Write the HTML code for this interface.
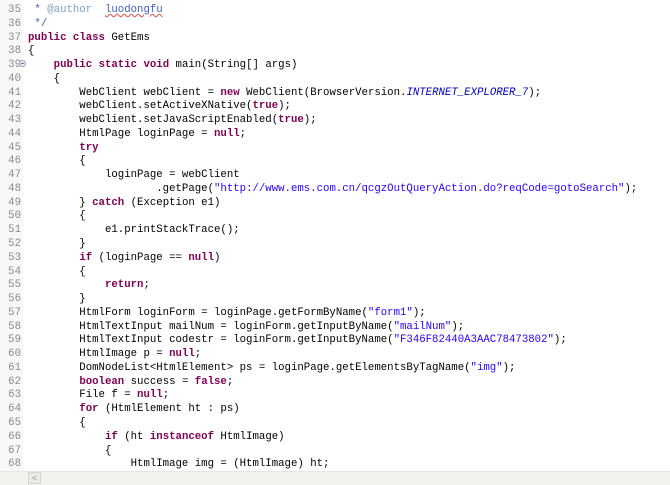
<!DOCTYPE html>
<html><head><meta charset="utf-8">
<style>
html,body{margin:0;padding:0;width:670px;height:484px;overflow:hidden;background:#fff;}
#g{position:absolute;left:0;top:0;width:23px;height:471px;background:#f8f8f6;}
#ln{position:absolute;left:0;top:4px;width:21px;text-align:right;font:10.7px/13.76px "Liberation Mono",monospace;color:#8a8a8a;white-space:pre;}
#code{position:absolute;left:28px;top:4px;font:10.7px/13.76px "Liberation Mono",monospace;color:#000;white-space:pre;}
.k{color:#7f0055;font-weight:bold}
.s{color:#2a00ff}
.c{color:#3f5fbf}
.t{color:#7f9fbf}
.f{color:#0000c0;font-style:italic}
.u{text-decoration:underline wavy #e06060;}
#sb{position:absolute;left:0;top:471px;width:670px;height:13px;background:#f3f2ee;border-top:1px solid #e6e5e0;}
#arr{position:absolute;left:28px;top:472px;width:13px;height:12px;background:#eceae4;border:1px solid #d8d6d0;box-sizing:border-box;font:9px/10px "Liberation Sans",sans-serif;color:#999;text-align:center;}
#fold{position:absolute;left:19px;top:60px;width:7px;height:7px;border:1px solid #9aa8c0;border-radius:50%;box-sizing:border-box;background:#e8eef8;}
#fold:after{content:"";position:absolute;left:1px;top:2px;width:3px;height:1px;background:#6a7a9a;}
</style></head><body>
<div id="g"></div>
<div id="ln">35
36
37
38
39
40
41
42
43
44
45
46
47
48
49
50
51
52
53
54
55
56
57
58
59
60
61
62
63
64
65
66
67
68</div>
<div id="fold"></div>
<div id="code"><span class="c"> * <span class="t">@author</span>  <span class="u">luodongfu</span></span>
<span class="c"> */</span>
<span class="k">public</span> <span class="k">class</span> GetEms
{
    <span class="k">public</span> <span class="k">static</span> <span class="k">void</span> main(String[] args)
    {
        WebClient webClient = <span class="k">new</span> WebClient(BrowserVersion.<span class="f">INTERNET_EXPLORER_7</span>);
        webClient.setActiveXNative(<span class="k">true</span>);
        webClient.setJavaScriptEnabled(<span class="k">true</span>);
        HtmlPage loginPage = <span class="k">null</span>;
        <span class="k">try</span>
        {
            loginPage = webClient
                    .getPage(<span class="s">"http://www.ems.com.cn/qcgzOutQueryAction.do?reqCode=gotoSearch"</span>);
        } <span class="k">catch</span> (Exception e1)
        {
            e1.printStackTrace();
        }
        <span class="k">if</span> (loginPage == <span class="k">null</span>)
        {
            <span class="k">return</span>;
        }
        HtmlForm loginForm = loginPage.getFormByName(<span class="s">"form1"</span>);
        HtmlTextInput mailNum = loginForm.getInputByName(<span class="s">"mailNum"</span>);
        HtmlTextInput codestr = loginForm.getInputByName(<span class="s">"F346F82440A3AAC78473802"</span>);
        HtmlImage p = <span class="k">null</span>;
        DomNodeList&lt;HtmlElement&gt; ps = loginPage.getElementsByTagName(<span class="s">"img"</span>);
        <span class="k">boolean</span> success = <span class="k">false</span>;
        File f = <span class="k">null</span>;
        <span class="k">for</span> (HtmlElement ht : ps)
        {
            <span class="k">if</span> (ht <span class="k">instanceof</span> HtmlImage)
            {
                HtmlImage img = (HtmlImage) ht;</div>
<div id="sb"></div>
<div id="arr">&lt;</div>
</body></html>
